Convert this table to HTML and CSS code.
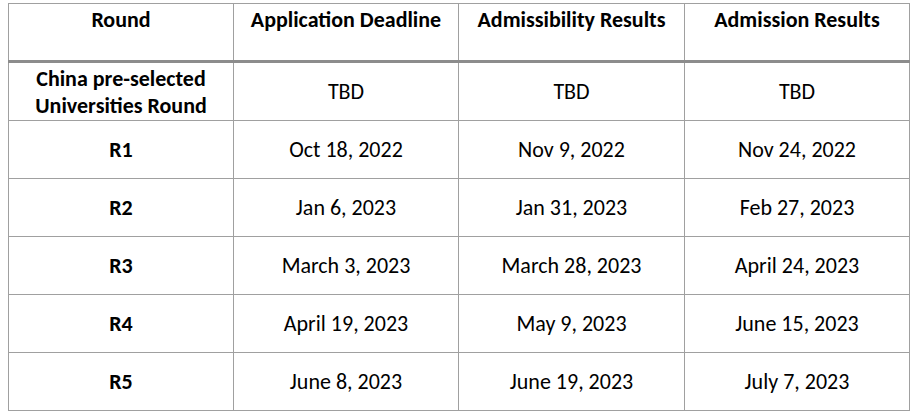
FILE: index.html
```html
<!DOCTYPE html>
<html lang="en">
<head>
<meta charset="utf-8">
<title>Rounds</title>
<link rel="stylesheet" href="styles.css">
</head>
<body class="page">
<table class="schedule">
  <colgroup>
    <col class="c1"><col class="c2"><col class="c3"><col class="c4">
  </colgroup>
  <thead>
    <tr class="head-row">
      <th>Round</th>
      <th>Application Deadline</th>
      <th>Admissibility Results</th>
      <th>Admission Results</th>
    </tr>
  </thead>
  <tbody>
    <tr>
      <td class="label">China pre-selected<br>Universities Round</td>
      <td>TBD</td><td>TBD</td><td>TBD</td>
    </tr>
    <tr>
      <td class="label">R1</td>
      <td>Oct 18, 2022</td><td>Nov 9, 2022</td><td>Nov 24, 2022</td>
    </tr>
    <tr>
      <td class="label">R2</td>
      <td>Jan 6, 2023</td><td>Jan 31, 2023</td><td>Feb 27, 2023</td>
    </tr>
    <tr>
      <td class="label">R3</td>
      <td>March 3, 2023</td><td>March 28, 2023</td><td>April 24, 2023</td>
    </tr>
    <tr>
      <td class="label">R4</td>
      <td>April 19, 2023</td><td>May 9, 2023</td><td>June 15, 2023</td>
    </tr>
    <tr>
      <td class="label">R5</td>
      <td>June 8, 2023</td><td>June 19, 2023</td><td>July 7, 2023</td>
    </tr>
  </tbody>
</table>
</body>
</html>
```
FILE: styles.css
```css
html, body {
  background: #ffffff;
}
.page {
  margin: 3px 0 0 8px;
  font-family: "Carlito", "Lato", "Liberation Sans", sans-serif;
  color: #000000;
}
.schedule {
  border-collapse: collapse;
  table-layout: fixed;
  width: 902px;
  font-size: 22px;
}
.c1, .c2, .c4 { width: 225px; }
.c3 { width: 226px; }
.schedule th,
.schedule td {
  border: 1px solid #a0a0a0;
  text-align: center;
  padding: 0 2px;
  line-height: 27px;
}
.schedule th {
  font-weight: 700;
  vertical-align: top;
  height: 54px;
  padding-top: 2px;
  padding-bottom: 0;
  border-bottom: 3px solid #8c8c8c;
}
.schedule td {
  font-weight: 400;
  vertical-align: middle;
  height: 57px;
  padding-top: 0;
  padding-bottom: 0;
}
.schedule td.label {
  font-weight: 700;
}
```
